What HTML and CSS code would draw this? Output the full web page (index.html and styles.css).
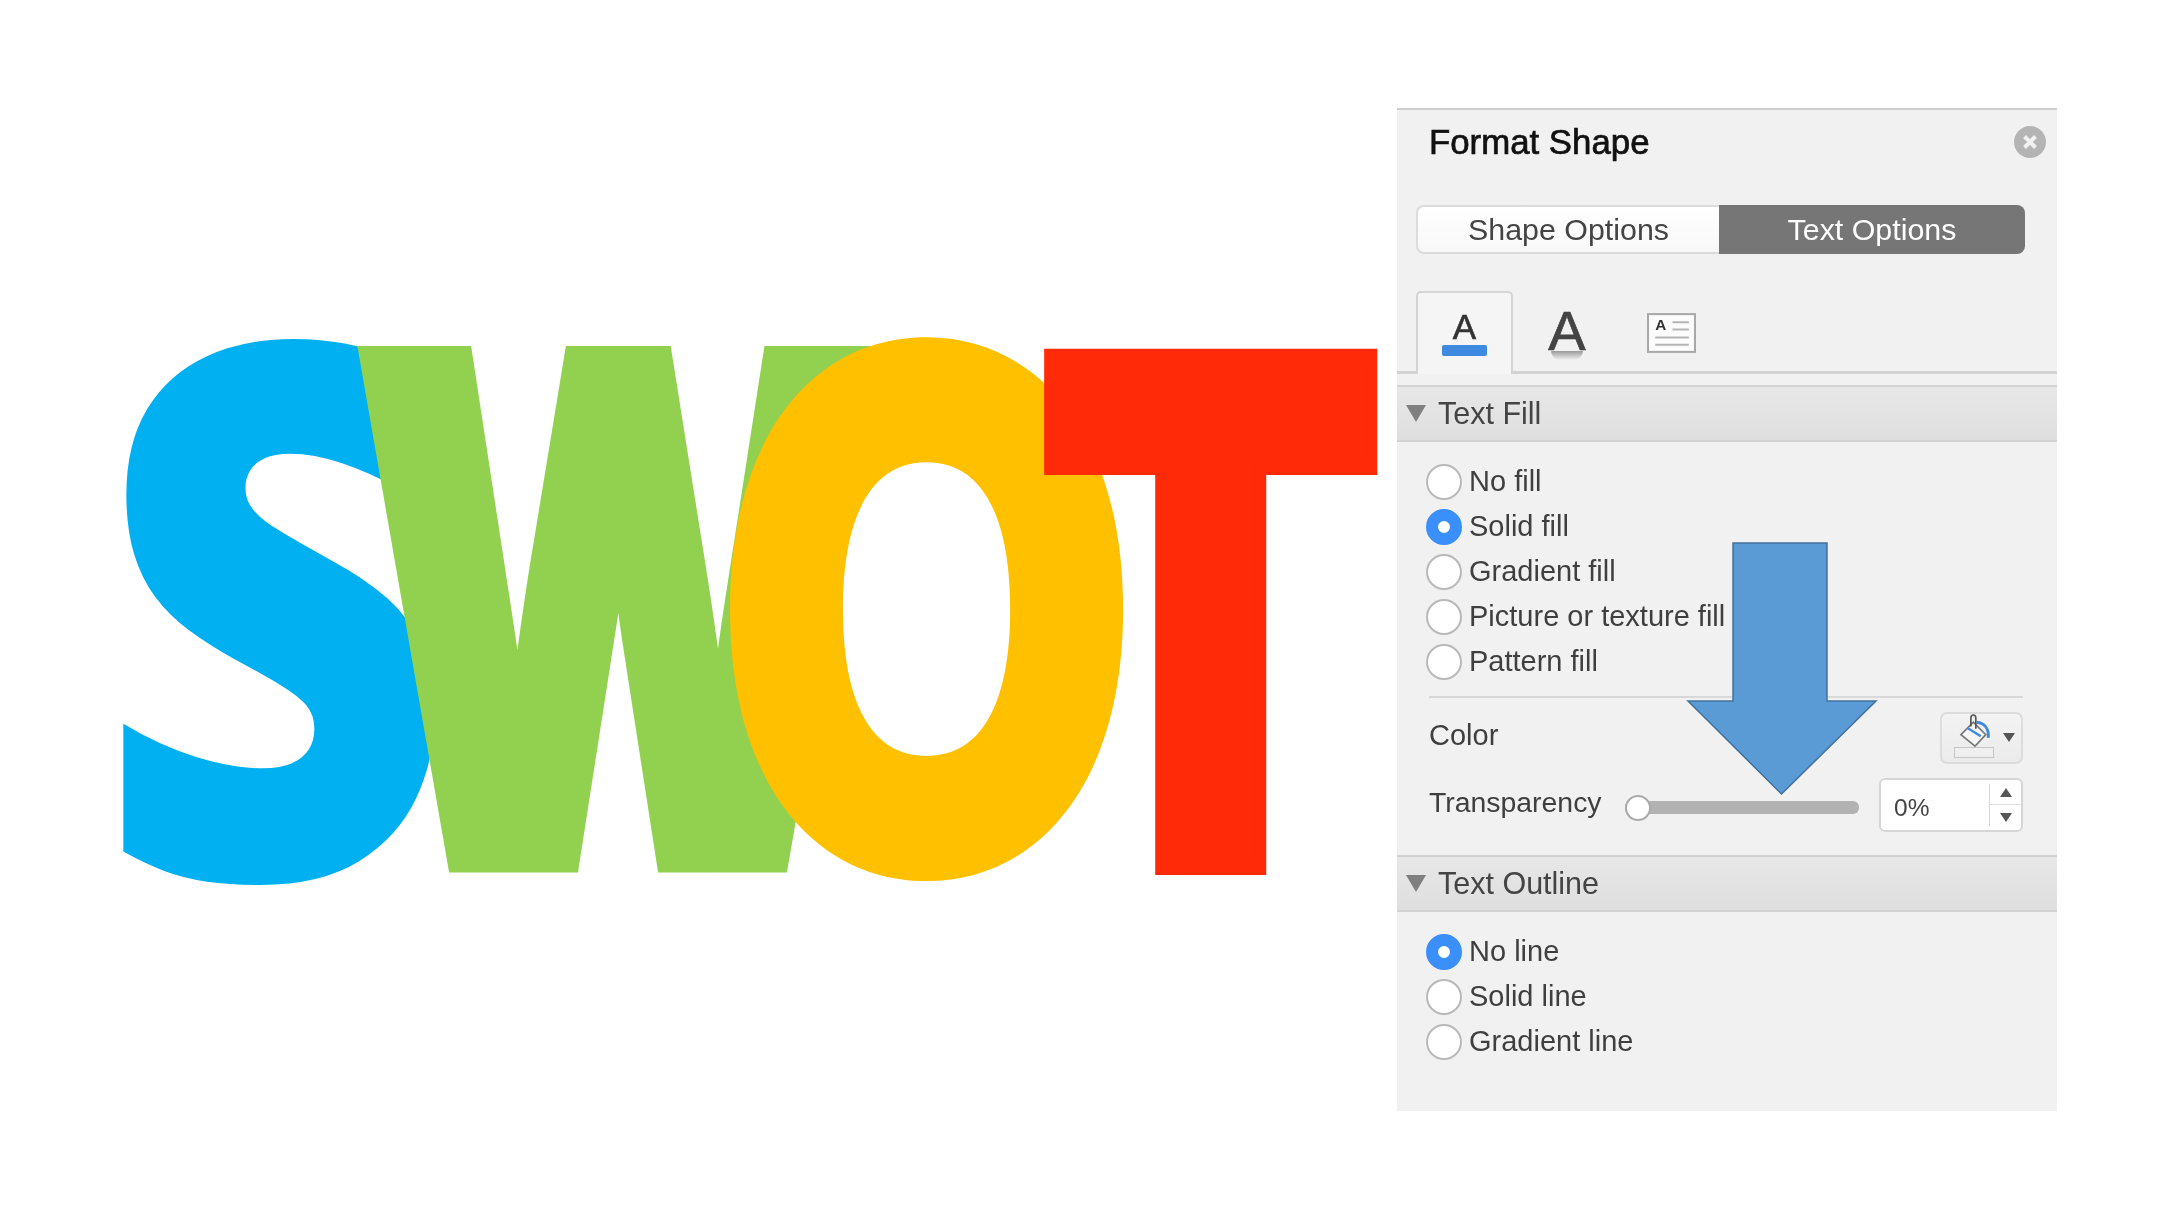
FILE: index.html
```html
<!DOCTYPE html>
<html lang="en">
<head>
<meta charset="utf-8">
<title>SWOT - Format Shape</title>
<link rel="stylesheet" href="styles.css">
</head>
<body>
<main class="page">
  <svg class="stage" viewBox="0 0 1397 1215" aria-label="SWOT">
    <text class="letter l-s" transform="matrix(.622 0 0 .744 96 877.700)">S</text>
    <text class="letter l-w" transform="matrix(.4885 0 0 .694 364 857)">W</text>
    <text class="letter l-o" transform="matrix(.556 0 0 .728 711 874)">O</text>
    <text class="letter l-t" transform="matrix(.511 0 0 .704 1035.300 868)">T</text>
  </svg>
  <div class="panel-wrap">
    <aside class="panel">
      <header class="title-row">
        <h1 class="title">Format Shape</h1>
        <span class="close"><svg viewBox="0 0 32 32" class="close-x"><path d="M10.500 10.500 21.500 21.500M21.500 10.500 10.500 21.500"/></svg></span>
      </header>
      <div class="segmented">
        <span class="seg">Shape Options</span>
        <span class="seg seg-on">Text Options</span>
      </div>
      <nav class="tabs">
        <div class="tab tab-on">
          <span class="a-fill">A</span>
          <span class="a-bar"></span>
        </div>
        <div class="tab tab-outline">
          <span class="a-outline">A</span>
          <span class="a-shadow"></span>
        </div>
        <div class="tab tab-doc">
          <svg class="doc" viewBox="0 0 48 39">
            <rect class="doc-page" x="1" y="1" width="46" height="37"/>
            <text class="doc-a" x="8" y="17">A</text>
            <path class="doc-line" d="M25 9H41M25 16H41M8 24H41M8 31H41"/>
          </svg>
        </div>
      </nav>

      <section>
        <h2 class="section-head"><span class="caret"></span>Text Fill</h2>
        <div class="radios">
          <label class="radio"><span class="dot"></span>No fill</label>
          <label class="radio"><span class="dot dot-on"></span>Solid fill</label>
          <label class="radio"><span class="dot"></span>Gradient fill</label>
          <label class="radio"><span class="dot"></span>Picture or texture fill</label>
          <label class="radio"><span class="dot"></span>Pattern fill</label>
        </div>
        <div class="rule"></div>
        <div class="row row-color">
          <span class="row-label">Color</span>
          <button class="color-btn">
            <svg class="bucket" viewBox="0 0 40 46">
              <path class="bucket-body" d="M3 25 18 10 33 25 20 39Z"/>
              <path class="bucket-blue" d="M11 17 27 27"/>
              <path class="bucket-handle" d="M15 15V5C15 0 21 0 21 5V18"/>
              <path class="bucket-drip" d="M22 10C32 11 37 18 36 29"/>
            </svg>
            <span class="swatch"></span>
            <span class="mini-caret"></span>
          </button>
        </div>
        <div class="row row-trans">
          <span class="row-label">Transparency</span>
          <div class="slider"><span class="thumb"></span></div>
          <div class="spin">
            <span class="spin-val">0%</span>
            <span class="spin-btns">
              <span class="spin-up"><i class="tri-up"></i></span>
              <span class="spin-down"><i class="tri-down"></i></span>
            </span>
          </div>
        </div>
      </section>

      <section class="outline">
        <h2 class="section-head"><span class="caret"></span>Text Outline</h2>
        <div class="radios">
          <label class="radio"><span class="dot dot-on"></span>No line</label>
          <label class="radio"><span class="dot"></span>Solid line</label>
          <label class="radio"><span class="dot"></span>Gradient line</label>
        </div>
      </section>
    </aside>
    <svg class="arrow" viewBox="0 0 192 255">
      <path d="M47 1H141V159H190L95.500 252 2 159H47Z"/>
    </svg>
  </div>
</main>
</body>
</html>
```
FILE: styles.css
```css
* { box-sizing: border-box; }
html, body { margin: 0; height: 100%; background: #fff; }
body { font-family: "Liberation Sans", Arial, sans-serif; overflow: hidden; }

.page { display: flex; align-items: flex-start; width: 2160px; height: 1215px; }

/* SWOT wordmark */
.stage { width: 1397px; height: 1215px; flex: none; }
.letter { font-family: Inter, sans-serif; font-weight: 900; font-size: 1000px; }
.l-s { fill: #00b0f0; font-family: "Open Sans", sans-serif; font-weight: 800; }
.l-w { fill: #92d050; stroke: #92d050; stroke-width: 45; stroke-linejoin: miter; stroke-miterlimit: 10; font-family: "Open Sans", sans-serif; font-weight: 800; }
.l-o { fill: #ffc000; }
.l-t { fill: #ff2a08; stroke: #ff2a08; stroke-width: 20; stroke-linejoin: miter; }

/* Panel */
.panel-wrap { position: relative; margin-top: 108px; width: 660px; height: 1003px; flex: none; }
.panel {
  width: 100%; height: 100%;
  background: #f1f1f1;
  border-top: 2px solid #cfcfcf;
  color: #3f3f3f;
  font-size: 29px;
  filter: blur(.6px);
}
.arrow { position: absolute; left: 289px; top: 434px; width: 192px; height: 255px; }
.arrow path { fill: #5b9bd5; stroke: #41719c; stroke-width: 1.5; }

.title-row { display: flex; align-items: center; justify-content: space-between; height: 64px; padding: 0 11px 0 32px; margin-bottom: 31px; }
.title { margin: 0; font-size: 34.800px; font-weight: 400; color: #111; -webkit-text-stroke: .7px #111; }
.close { width: 32px; height: 32px; border-radius: 50%; background: #b4b4b4; display: block; }
.close-x { display: block; width: 32px; height: 32px; }
.close-x path { stroke: #f1f1f1; stroke-width: 4; fill: none; }

.segmented { display: flex; width: 609px; height: 49px; margin-left: 19px; border-radius: 8px; font-size: 30.400px; }
.seg { flex: none; display: flex; align-items: center; justify-content: center; }
.seg:first-child { width: 303px; background: linear-gradient(#fff, #f8f8f8); border: 2px solid #dcdcdc; border-right: 0; border-radius: 8px 0 0 8px; color: #444; }
.seg-on { width: 306px; background: #767676; color: #fff; border-radius: 0 8px 8px 0; }

.tabs { display: flex; height: 83px; margin-top: 37px; margin-bottom: 11px; border-bottom: 3px solid #d2d2d2; }
.tab { position: relative; width: 104px; height: 83px; display: flex; flex-direction: column; align-items: center; }
.tab-on { width: 97px; margin-left: 19px; background: #f5f5f5; border: 2px solid #d4d4d4; border-bottom: 0; border-radius: 5px 5px 0 0; }
.tab-outline { width: 108px; }
.a-fill { font-size: 35px; line-height: 25px; margin-top: 21px; color: #333; height: 25px; -webkit-text-stroke: .6px #333; }
.a-bar { width: 45px; height: 11px; margin-top: 6px; background: #3d8ae0; border-radius: 2px; }
.a-outline { font-size: 56px; line-height: 39px; height: 39px; margin-top: 20px; color: #444; -webkit-text-stroke: .7px #444; }
.a-shadow { width: 32px; height: 9px; margin-top: 1px; background: linear-gradient(#9a9a9a, #f1f1f1); border-radius: 0 0 14px 14px; }
.tab-doc { width: 49px; margin-left: 26px; }
.doc { display: block; width: 49px; height: 40px; margin-top: 22px; }
.doc-page { fill: #fcfcfc; stroke: #a8a8a8; stroke-width: 2; }
.doc-a { font: 700 15px "Liberation Sans", sans-serif; fill: #333; }
.doc-line { stroke: #b5b5b5; stroke-width: 2; fill: none; }

.section-head {
  display: flex; align-items: center; height: 57px; margin: 0;
  background: linear-gradient(#e7e7e7, #dfdfdf);
  border-top: 2px solid #d2d2d2; border-bottom: 2px solid #d2d2d2;
  font-size: 30.500px; font-weight: 400; color: #444;
}
.caret { width: 0; height: 0; margin: 0 12px 0 9px; border-left: 10px solid transparent; border-right: 10px solid transparent; border-top: 17px solid #808080; }

.radios { padding-top: 17px; display: flex; flex-direction: column; }
.radio { display: flex; align-items: center; height: 45px; padding-left: 29px; }
.dot { width: 36px; height: 36px; margin-right: 7px; flex: none; border-radius: 50%; background: #fff; border: 2px solid #b9b9b9; }
.dot-on { border: 12px solid #3a8ffb; background: #fff; }

.rule { height: 2px; margin: 12px 34px 0 32px; background: #d8d8d8; }
.row { display: flex; align-items: center; margin-left: 32px; margin-right: 34px; }
.row-color { justify-content: space-between; height: 52px; margin-top: 14px; }
.row-color .row-label { position: relative; top: -3px; }
.row-trans { height: 54px; margin-top: 14px; }
.row-label { flex: none; }
.row-trans .row-label { position: relative; top: -3px; width: 196px; font-size: 28.400px; }

.color-btn { position: relative; width: 83px; height: 52px; padding: 0; background: linear-gradient(#f3f3f3, #ebebeb); border: 2px solid #dcdcdc; border-radius: 7px; }
.bucket { position: absolute; left: 16px; top: 0; width: 34px; height: 38px; }
.bucket-body { fill: #f7f7f7; stroke: #777; stroke-width: 2; }
.bucket-blue { fill: none; stroke: #3d8ae0; stroke-width: 3; }
.bucket-handle { fill: none; stroke: #555; stroke-width: 2; }
.bucket-drip { fill: none; stroke: #3d8ae0; stroke-width: 3.500; }
.swatch { position: absolute; left: 12px; top: 33px; width: 40px; height: 11px; background: #efefef; border: 1px solid #c6c6c6; }
.mini-caret { position: absolute; left: 61px; top: 19px; border-left: 6px solid transparent; border-right: 6px solid transparent; border-top: 9px solid #555; }

.slider { position: relative; width: 234px; height: 13px; margin-top: 4px; background: #b2b2b2; border-radius: 6px; flex: none; }
.thumb { position: absolute; left: 0; top: -6px; width: 26px; height: 26px; border-radius: 50%; background: #fff; border: 2px solid #a9a9a9; }
.spin { display: flex; align-items: stretch; width: 144px; height: 54px; margin-left: 20px; background: #fff; border: 2px solid #d6d6d6; border-radius: 6px; font-size: 24.500px; flex: none; }
.spin-val { flex: 1; display: flex; align-items: center; padding: 5px 0 0 13px; color: #444; }
.spin-btns { width: 32px; display: flex; flex-direction: column; margin: 4px 0; border-left: 1px solid #d8d8d8; }
.spin-up, .spin-down { flex: 1; display: flex; align-items: center; justify-content: center; }
.spin-up { border-bottom: 1px solid #dedede; padding-bottom: 2px; }
.spin-down { padding-top: 4px; }
.tri-up { border-left: 6px solid transparent; border-right: 6px solid transparent; border-bottom: 9px solid #555; }
.tri-down { border-left: 6px solid transparent; border-right: 6px solid transparent; border-top: 9px solid #555; }

.outline { margin-top: 23px; }
```
